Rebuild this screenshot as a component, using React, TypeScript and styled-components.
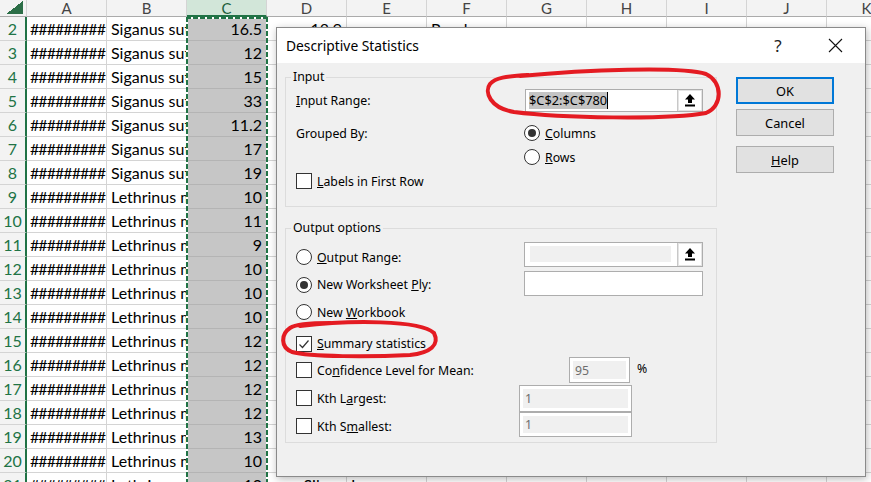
import React from 'react';
import styled, { createGlobalStyle } from 'styled-components';

const GlobalStyle = createGlobalStyle`
  html, body { margin: 0; padding: 0; background: #ffffff; }
  #root { width: 871px; height: 482px; overflow: hidden; }
`;

const Screen = styled.div`
  position: relative;
  width: 871px;
  height: 482px;
  overflow: hidden;
  font-family: Lato, "Liberation Sans", sans-serif;
`;

/* ---------- spreadsheet ---------- */

const Sheet = styled.div`
  display: grid;
  grid-template-columns: 27px repeat(11, 80px);
  grid-template-rows: 17px;
  grid-auto-rows: 24px;
  width: max-content;
`;

const Corner = styled.div`
  box-sizing: border-box;
  border-right: 1px solid #d4d4d4;
  border-bottom: 1px solid #ababab;
  background: linear-gradient(to top left, #2c6e47 50%, transparent 50%) no-repeat right 3px bottom 2px / 17px 13px,
    #f3f3f3;
`;

const ColHead = styled.div<{ $active?: boolean }>`
  box-sizing: border-box;
  display: flex;
  align-items: center;
  justify-content: center;
  font-size: 15px;
  line-height: 16px;
  background: ${(p) => (p.$active ? '#d2e6d9' : '#f3f3f3')};
  color: ${(p) => (p.$active ? '#1d5f3a' : '#444444')};
  border-right: 1px solid #d4d4d4;
  border-bottom: ${(p) => (p.$active ? '2px solid #217346' : '1px solid #ababab')};
`;

const RowHead = styled.div`
  box-sizing: border-box;
  display: flex;
  align-items: center;
  justify-content: center;
  font-size: 16px;
  color: #217346;
  background: #f3f3f3;
  border-right: 2px solid #217346;
  border-bottom: 1px solid #d4d4d4;
`;

const Cell = styled.div<{ $right?: boolean; $selected?: boolean; $tight?: boolean }>`
  box-sizing: border-box;
  padding: 0 ${(p) => (p.$tight ? 3 : 4)}px;
  font-size: 16px;
  line-height: 23px;
  letter-spacing: ${(p) => (p.$tight ? '-0.95px' : 'normal')};
  color: #000000;
  white-space: nowrap;
  overflow: hidden;
  text-align: ${(p) => (p.$right ? 'right' : 'left')};
  background: ${(p) => (p.$selected ? '#c6c6c6' : '#ffffff')};
  border-right: 1px solid ${(p) => (p.$selected ? '#b4b4b4' : '#d4d4d4')};
  border-bottom: 1px solid ${(p) => (p.$selected ? '#b4b4b4' : '#d4d4d4')};
`;

const Marquee = styled.div`
  position: absolute;
  left: 186px;
  top: 17px;
  width: 82px;
  height: 470px;
  pointer-events: none;
  background:
    repeating-linear-gradient(to bottom, #217346 0 5px, #ffffff 5px 7px) left top / 2px 100% no-repeat,
    repeating-linear-gradient(to bottom, #217346 0 5px, #ffffff 5px 7px) right top / 2px 100% no-repeat,
    repeating-linear-gradient(to right, #217346 0 5px, #ffffff 5px 7px) left top / 100% 2px no-repeat;
`;

/* ---------- dialog ---------- */

const Dialog = styled.div`
  position: absolute;
  left: 276px;
  top: 27px;
  width: 590px;
  height: 450px;
  box-sizing: border-box;
  border: 1px solid #8a8a8a;
  background: #f0f0f0;
  box-shadow: 1px 2px 8px rgba(0, 0, 0, 0.28);
  display: flex;
  flex-direction: column;
  font-family: "Noto Sans", "Open Sans", sans-serif;
  font-size: 12.3px;
  color: #000000;
`;

const TitleBar = styled.div`
  height: 35px;
  flex: none;
  background: #ffffff;
  display: flex;
  align-items: center;
`;

const Title = styled.div`
  flex: 1;
  padding-left: 9px;
  font-size: 13.8px;
`;

const TitleButton = styled.div<{ $w: number }>`
  width: ${(p) => p.$w}px;
  height: 100%;
  display: flex;
  align-items: center;
  justify-content: center;
  font-size: 17px;
  color: #222222;
`;

const Body = styled.div`
  display: flex;
  gap: 19px;
  padding: 6px 0 0 8px;
`;

const LeftCol = styled.div`
  width: 432px;
  display: flex;
  flex-direction: column;
`;

const RightCol = styled.div`
  width: 98px;
  display: flex;
  flex-direction: column;
  padding-top: 8px;
`;

const Group = styled.fieldset<{ $h: number; $mt?: number }>`
  box-sizing: border-box;
  margin: ${(p) => p.$mt ?? 0}px 0 0 0;
  height: ${(p) => p.$h}px;
  min-inline-size: 0;
  border: 1px solid #dcdcdc;
  padding: 0 0 0 10px;
`;

const Legend = styled.legend`
  padding: 0 2px;
  margin-left: -5px;
  font-size: 12.3px;
  line-height: 16px;
`;

const Row = styled.div<{ $h: number; $mt?: number }>`
  display: flex;
  align-items: center;
  height: ${(p) => p.$h}px;
  margin-top: ${(p) => p.$mt ?? 0}px;
`;

const Lead = styled.div<{ $w: number }>`
  width: ${(p) => p.$w}px;
  flex: none;
  display: flex;
  align-items: center;
  gap: 5px;
  white-space: nowrap;
`;

const Radio = styled.span<{ $on?: boolean }>`
  box-sizing: border-box;
  width: 16px;
  height: 16px;
  flex: none;
  border-radius: 50%;
  border: 1px solid #333333;
  background: #ffffff;
  display: flex;
  align-items: center;
  justify-content: center;
  &::after {
    content: '';
    width: 8px;
    height: 8px;
    border-radius: 50%;
    background: ${(p) => (p.$on ? '#333333' : 'transparent')};
  }
`;

const Check = styled.span`
  box-sizing: border-box;
  width: 16px;
  height: 16px;
  flex: none;
  border: 1px solid #333333;
  background: #ffffff;
  display: flex;
  align-items: center;
  justify-content: center;
`;

const Field = styled.div<{ $w: number; $h: number; $dy?: number }>`
  box-sizing: border-box;
  width: ${(p) => p.$w}px;
  height: ${(p) => p.$h}px;
  border: 1px solid #adadad;
  background: #ffffff;
  display: flex;
  transform: translateY(${(p) => p.$dy ?? 0}px);
`;

const FieldText = styled.div<{ $disabled?: boolean }>`
  flex: 1;
  display: flex;
  align-items: center;
  padding-left: 3px;
  margin: ${(p) => (p.$disabled ? '3px 6px 4px 5px' : '0')};
  background: ${(p) => (p.$disabled ? '#f0f0f0' : '#ffffff')};
  font-size: 12.8px;
`;

const Selected = styled.span`
  background: #c4c4c4;
  border-right: 1px solid #000000;
  line-height: 17px;
`;

const RefButton = styled.div`
  width: 25px;
  flex: none;
  box-sizing: border-box;
  border-left: 1px solid #c8c8c8;
  box-shadow: inset 0 0 0 1px #e4e4e4;
  display: flex;
  align-items: center;
  justify-content: center;
  background: #ffffff;
`;

const SmallBox = styled.div<{ $w: number; $h: number; $dy?: number }>`
  box-sizing: border-box;
  width: ${(p) => p.$w}px;
  height: ${(p) => p.$h}px;
  border: 1px solid #adadad;
  background: #ffffff;
  padding: 3px;
  display: flex;
  transform: translateY(${(p) => p.$dy ?? 0}px);
`;

const SmallBoxInner = styled.div`
  flex: 1;
  background: #f0f0f0;
  color: #6d6d6d;
  padding-left: 2px;
  display: flex;
  align-items: center;
`;

const Percent = styled.span`
  margin-left: 7px;
  transform: translateY(-2px);
`;

const Button = styled.div<{ $primary?: boolean; $mt?: number }>`
  box-sizing: border-box;
  height: 27px;
  margin-top: ${(p) => p.$mt ?? 0}px;
  background: #e1e1e1;
  border: ${(p) => (p.$primary ? '2px solid #0078d7' : '1px solid #adadad')};
  display: flex;
  align-items: center;
  justify-content: center;
  font-size: 12.8px;
`;

const Annotations = styled.svg`
  position: absolute;
  left: 0;
  top: 0;
  pointer-events: none;
`;

const UpArrow = () => (
  <svg width="12" height="14" viewBox="0 0 12 14">
    <path d="M6 1 L11 6.5 H8 V10 H4 V6.5 H1 Z" fill="#000" />
    <rect x="1" y="11.5" width="10" height="2" fill="#000" />
  </svg>
);

const Tick = () => (
  <svg width="14" height="14" viewBox="0 0 14 14">
    <path d="M2.5 7.5 L5.5 10.5 L11.5 3.5" fill="none" stroke="#333" strokeWidth="1.2" />
  </svg>
);

const CloseX = () => (
  <svg width="15" height="15" viewBox="0 0 15 15">
    <path d="M1 1 L14 14 M14 1 L1 14" stroke="#111" strokeWidth="1.1" />
  </svg>
);

const cols = ['A', 'B', 'C', 'D', 'E', 'F', 'G', 'H', 'I', 'J', 'K'];

const data: [string, string][] = [
  ['Siganus sutor', '16.5'],
  ['Siganus sutor', '12'],
  ['Siganus sutor', '15'],
  ['Siganus sutor', '33'],
  ['Siganus sutor', '11.2'],
  ['Siganus sutor', '17'],
  ['Siganus sutor', '19'],
  ['Lethrinus mahsena', '10'],
  ['Lethrinus mahsena', '11'],
  ['Lethrinus mahsena', '9'],
  ['Lethrinus mahsena', '10'],
  ['Lethrinus mahsena', '10'],
  ['Lethrinus mahsena', '10'],
  ['Lethrinus mahsena', '12'],
  ['Lethrinus mahsena', '12'],
  ['Lethrinus mahsena', '12'],
  ['Lethrinus mahsena', '12'],
  ['Lethrinus mahsena', '13'],
  ['Lethrinus mahsena', '10'],
  ['Lethrinus mahsena', '10'],
];

const extras: Record<number, Record<string, string>> = {
  2: { D: '18.9', F: 'Rasal' },
  21: { D: 'Silver', E: 'Lom' },
};

export default function App() {
  return (
    <Screen>
      <GlobalStyle />
      <Sheet>
        <Corner />
        {cols.map((c) => (
          <ColHead key={c} $active={c === 'C'}>
            {c}
          </ColHead>
        ))}
        {data.map(([name, val], i) => {
          const r = i + 2;
          const ex = extras[r] || {};
          return (
            <React.Fragment key={r}>
              <RowHead>{r}</RowHead>
              <Cell $tight>#########</Cell>
              <Cell>{name}</Cell>
              <Cell $right $selected>
                {val}
              </Cell>
              {cols.slice(3).map((c) => (
                <Cell key={c} $right={c === 'D'}>
                  {ex[c] || ''}
                </Cell>
              ))}
            </React.Fragment>
          );
        })}
      </Sheet>
      <Marquee />

      <Dialog>
        <TitleBar>
          <Title>Descriptive Statistics</Title>
          <TitleButton $w={54}>?</TitleButton>
          <TitleButton $w={60}>
            <CloseX />
          </TitleButton>
        </TitleBar>
        <Body>
          <LeftCol>
            <Group $h={138}>
              <Legend>Input</Legend>
              <Row $h={24} $mt={3}>
                <Lead $w={229}>
                  <span>
                    <u>I</u>nput Range:
                  </span>
                </Lead>
                <Field $w={178} $h={23}>
                  <FieldText>
                    <Selected>$C$2:$C$780</Selected>
                  </FieldText>
                  <RefButton>
                    <UpArrow />
                  </RefButton>
                </Field>
              </Row>
              <Row $h={24} $mt={9}>
                <Lead $w={228}>Grouped By:</Lead>
                <Lead $w={120}>
                  <Radio $on />
                  <span>
                    <u>C</u>olumns
                  </span>
                </Lead>
              </Row>
              <Row $h={24}>
                <Lead $w={228} />
                <Lead $w={120}>
                  <Radio />
                  <span>
                    <u>R</u>ows
                  </span>
                </Lead>
              </Row>
              <Row $h={24}>
                <Lead $w={228}>
                  <Check />
                  <span>
                    <u>L</u>abels in First Row
                  </span>
                </Lead>
              </Row>
            </Group>

            <Group $h={223} $mt={13}>
              <Legend>Output options</Legend>
              <Row $h={28} $mt={7}>
                <Lead $w={228}>
                  <Radio />
                  <span>
                    <u>O</u>utput Range:
                  </span>
                </Lead>
                <Field $w={179} $h={25} $dy={-3}>
                  <FieldText $disabled />
                  <RefButton>
                    <UpArrow />
                  </RefButton>
                </Field>
              </Row>
              <Row $h={27}>
                <Lead $w={228}>
                  <Radio $on />
                  <span>
                    New Worksheet <u>P</u>ly:
                  </span>
                </Lead>
                <Field $w={179} $h={25} $dy={-1} />
              </Row>
              <Row $h={28}>
                <Lead $w={228}>
                  <Radio />
                  <span>
                    New <u>W</u>orkbook
                  </span>
                </Lead>
              </Row>
              <Row $h={25} $mt={5}>
                <Lead $w={228}>
                  <Check>
                    <Tick />
                  </Check>
                  <span>
                    <u>S</u>ummary statistics
                  </span>
                </Lead>
              </Row>
              <Row $h={28}>
                <Lead $w={273}>
                  <Check />
                  <span>
                    Co<u>n</u>fidence Level for Mean:
                  </span>
                </Lead>
                <SmallBox $w={61} $h={26}>
                  <SmallBoxInner>95</SmallBoxInner>
                </SmallBox>
                <Percent>%</Percent>
              </Row>
              <Row $h={28}>
                <Lead $w={223}>
                  <Check />
                  <span>
                    Kth L<u>a</u>rgest:
                  </span>
                </Lead>
                <SmallBox $w={113} $h={27}>
                  <SmallBoxInner>1</SmallBoxInner>
                </SmallBox>
              </Row>
              <Row $h={28}>
                <Lead $w={223}>
                  <Check />
                  <span>
                    Kth S<u>m</u>allest:
                  </span>
                </Lead>
                <SmallBox $w={113} $h={25} $dy={-2}>
                  <SmallBoxInner>1</SmallBoxInner>
                </SmallBox>
              </Row>
            </Group>
          </LeftCol>

          <RightCol>
            <Button $primary>OK</Button>
            <Button $mt={5}>Cancel</Button>
            <Button $mt={10}>
              <span>
                <u>H</u>elp
              </span>
            </Button>
          </RightCol>
        </Body>
      </Dialog>

      <Annotations width="871" height="482" viewBox="0 0 871 482">
        <path
          d="M520 76 C585 70 680 66 706 74 C723 82 723 106 706 113 C668 120 560 118 514 112 C490 108 484 92 490 84 C495 78 506 76 528 75"
          fill="none"
          stroke="#e41b22"
          strokeWidth="4"
          strokeLinecap="round"
        />
        <path
          d="M300 326 C350 320 420 320 434 333 C440 345 430 353 410 355 C370 357 310 357 292 352 C280 347 281 334 290 328 C296 324 310 323 330 323"
          fill="none"
          stroke="#e41b22"
          strokeWidth="4"
          strokeLinecap="round"
        />
      </Annotations>
    </Screen>
  );
}
